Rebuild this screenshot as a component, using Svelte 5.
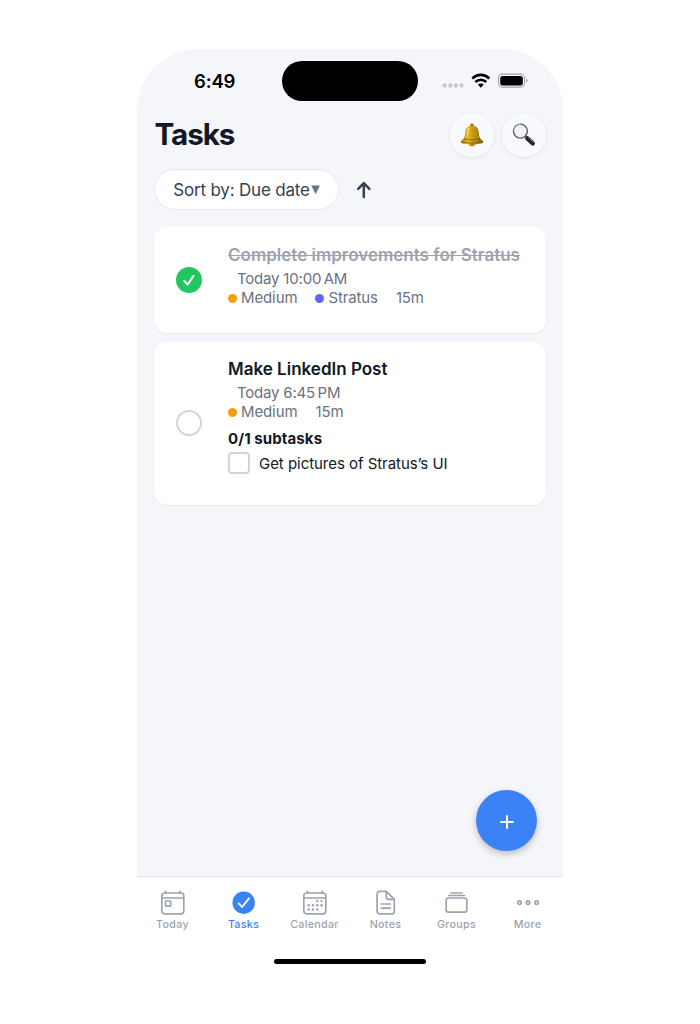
<script>
  const tasks = [
    {
      title: 'Complete improvements for Stratus',
      done: true,
      when: 'Today 10:00\u2009AM',
      group: 'Stratus',
      length: '15m',
      subtasks: []
    },
    {
      title: 'Make LinkedIn Post',
      done: false,
      when: 'Today 6:45\u2009PM',
      group: null,
      length: '15m',
      subtasks: ['Get pictures of Stratus’s UI']
    }
  ];
  const tabs = ['Today', 'Tasks', 'Calendar', 'Notes', 'Groups', 'More'];
  const days = [[16.3, 11.4], [20.6, 11.4], [7.6, 15.6], [11.9, 15.6], [16.3, 15.6], [20.6, 15.6], [7.6, 19.8], [11.9, 19.8], [16.3, 19.8]];
</script>

<main class="phone">
  <div class="status">
    <span class="time">6:49</span>
    <span class="island"></span>
    <svg class="signals" width="88" height="20" viewBox="0 0 88 20" aria-hidden="true">
      <g fill="#c6c7cb">
        <rect x=".6" y="12.6" width="4" height="3.8" rx="1.3" /><rect x="6.3" y="12.6" width="4" height="3.8" rx="1.3" />
        <rect x="11.9" y="12.6" width="4" height="3.8" rx="1.3" /><rect x="17.6" y="12.6" width="4" height="3.8" rx="1.3" />
      </g>
      <g fill="none" stroke="#000" stroke-width="2.6">
        <path d="M30.3 7.5C35.3 2.6 42.3 2.6 47.3 7.5" />
        <path d="M33.4 11C36.5 8 41.1 8 44.2 11" />
      </g>
      <path d="M35.8 13.6Q38.8 11.2 41.8 13.6L38.8 16.8Z" fill="#000" />
      <rect x="56.5" y="3.1" width="26" height="13" rx="4" fill="none" stroke="#a0a1a4" stroke-width="1.1" />
      <rect x="58.2" y="4.9" width="22.6" height="9.6" rx="2.5" fill="#000" />
      <path d="M84 7.7Q85.6 8.2 85.6 9.6T84 11.5Z" fill="#a0a1a4" />
    </svg>
  </div>

  <header>
    <h1>Tasks</h1>
    <div class="actions">
      <button aria-label="Notifications">
        <svg width="26" height="26" viewBox="0 0 26 26">
          <defs>
            <linearGradient id="gold"><stop offset="0" stop-color="#a87408" /><stop offset=".3" stop-color="#e6be2b" /><stop offset=".48" stop-color="#d0a01c" /><stop offset=".75" stop-color="#ae8312" /><stop offset="1" stop-color="#70500b" /></linearGradient>
          </defs>
          <circle cx="13" cy="3.2" r="1.8" fill="#9a6a16" />
          <ellipse cx="13" cy="22" rx="3" ry="2.3" fill="#bd7a20" />
          <path d="M13 3.4C7.6 3.5 6.2 7 6.1 11.4C6 15.6 4 17.3 2 19Q.9 22 6 21.8Q13 23.5 20 21.8Q25 21.8 24 19C21.8 17.3 20 15.6 19.9 11.4C19.8 7 18.4 3.5 13 3.4Z" fill="url(#gold)" />
          <path d="M5 17Q13 19.1 21 17M2.5 19.9Q13 22.9 23.5 19.9" fill="none" stroke="#8c600d" stroke-width=".9" />
          <path d="M9.8 6.2Q8.6 9 8.5 13" fill="none" stroke="#ffe77a" stroke-width="1.1" stroke-linecap="round" />
        </svg>
      </button>
      <button aria-label="Search">
        <svg width="26" height="26" viewBox="0 0 26 26">
          <path d="M14.2 14.2L17.3 17" stroke="#777b82" stroke-width="2.3" />
          <path d="M16.3 16.3L21.8 21.3" stroke="#24272c" stroke-width="4.4" stroke-linecap="round" />
          <path d="M17.6 15.8L22.6 20.3" stroke="#777b82" stroke-width=".9" stroke-linecap="round" />
          <circle cx="9.4" cy="9.1" r="7" fill="#f3f3f5" stroke="#596169" stroke-width="1.4" />
          <path d="M2.6 8.3A7 7 0 0 1 9.2 2.1" fill="none" stroke="#8fb4d4" stroke-width="1" />
        </svg>
      </button>
    </div>
  </header>

  <div class="sort">
    <button class="sort-by"><span>Sort by: Due date</span><svg width="9" height="10" viewBox="0 0 9 10"><path d="M.3 .5H8.9L4.6 9.3Z" fill="#6b7280" /></svg></button>
    <svg width="16" height="18" viewBox="0 0 16 18" fill="none" stroke="#374151" stroke-width="2.5" stroke-linecap="round" stroke-linejoin="round"><path d="M7.8 16V2.2M2.2 7.8L7.8 2.2L13.4 7.8" /></svg>
  </div>

  <section class="list">
    {#each tasks as task}
      <article class:tall={!task.done}>
        <div class="mark">
          {#if task.done}
            <svg width="26" height="26" viewBox="0 0 26 26"><circle cx="13" cy="13" r="13" fill="#22c55e" /><path d="M8.3 14L11.6 17.6L17.5 8.9" fill="none" stroke="#fff" stroke-width="2" stroke-linecap="round" stroke-linejoin="round" /></svg>
          {:else}
            <span class="ring"></span>
          {/if}
        </div>
        <div class="body">
          <h2 class:done={task.done}>{task.title}</h2>
          <p class="when">{task.when}</p>
          <p class="meta">
            <span class="tag"><i class="dot"></i>Medium</span>
            {#if task.group}<span class="tag"><i class="dot violet"></i>{task.group}</span>{/if}
            <span>{task.length}</span>
          </p>
          {#if task.subtasks.length}
            <h3>0/{task.subtasks.length} subtasks</h3>
            {#each task.subtasks as sub}
              <div class="sub"><span class="box"></span><span>{sub}</span></div>
            {/each}
          {/if}
        </div>
      </article>
    {/each}
  </section>

  <button class="fab" aria-label="Add task"><svg width="14" height="14" viewBox="0 0 14 14"><path d="M7 .3V13.7M.3 7H13.7" stroke="#fff" stroke-width="2" /></svg></button>

  <nav>
    {#each tabs as tab}
      <div class="tab" class:active={tab === 'Tasks'}>
        <svg width="28" height="26" viewBox="0 0 28 26" fill="none" stroke="currentColor" stroke-width="1.7" stroke-linecap="round" stroke-linejoin="round">
          {#if tab === 'Today'}
            <rect x="2.8" y="3" width="22" height="20.8" rx="2.8" /><path d="M3 8H24.6M6.6 1.3V3M21.1 1.3V3" /><rect x="6.5" y="11" width="5.2" height="5.2" rx=".8" />
          {:else if tab === 'Tasks'}
            <circle cx="13.7" cy="12.7" r="11.2" fill="currentColor" stroke="none" /><path d="M8.6 13.4L12 17L19 8.4" stroke="#fff" stroke-width="1.8" />
          {:else if tab === 'Calendar'}
            <rect x="2.8" y="3" width="22" height="20.8" rx="2.8" /><path d="M3 8H24.6M6.6 1.3V3M21.1 1.3V3" />
            {#each days as [x, y]}<circle cx={x} cy={y - 0.3} r="1.2" fill="currentColor" stroke="none" />{/each}
          {:else if tab === 'Notes'}
            <path d="M14.3 1.4H7.7A2.6 2.6 0 0 0 5.1 4V21.2A2.6 2.6 0 0 0 7.7 23.8H19.7A2.6 2.6 0 0 0 22.3 21.2V9.4ZM14.3 1.4V7.1Q14.3 9.4 16.6 9.4H22.3M9.3 14H18.2M9.3 18.2H18.2" />
          {:else if tab === 'Groups'}
            <rect x="3.2" y="8" width="20.6" height="14.2" rx="2.2" /><path d="M5.6 5.5H21.4M7.9 3H19.1" />
          {:else}
            <circle cx="5.5" cy="12.6" r="1.7" /><circle cx="14" cy="12.6" r="1.7" /><circle cx="22.6" cy="12.6" r="1.7" />
          {/if}
        </svg>
        <span>{tab}</span>
      </div>
    {/each}
  </nav>
  <div class="home"></div>
</main>

<style>
  :global(body) { margin: 0; background: #fff; }
  :global(#app) { display: flow-root; }
  .phone { box-sizing: border-box; position: relative; width: 426px; height: 926px; margin: 49px auto 0; border-radius: 61px; overflow: hidden; background: #f5f6fa; font-family: Inter, sans-serif; color: #111827; display: flex; flex-direction: column; }
  button { border: 0; padding: 0; margin: 0; font: inherit; color: inherit; display: flex; align-items: center; justify-content: center; }
  h1, h2, h3, p { margin: 0; white-space: nowrap; }
  svg { display: block; flex: none; }

  .status { display: grid; grid-template-columns: 145px 136px 145px; height: 52px; padding-top: 12px; box-sizing: border-box; align-items: center; }
  .time { padding-left: 57px; font-size: 18.5px; font-weight: 600; line-height: 24px; color: #000; letter-spacing: -.15px; }
  .island { height: 40px; border-radius: 20px; background: #000; }
  .signals { margin-left: 24px; }

  header { display: flex; justify-content: space-between; align-items: center; padding: 11.5px 17px 0 17.5px; height: 44px; }
  h1 { font-size: 29.7px; line-height: 43px; padding-bottom: 1px; font-weight: 700; letter-spacing: -1.1px; }
  .actions { display: flex; gap: 8px; }
  .actions button { width: 44px; height: 44px; border-radius: 50%; background: #f9fafb; box-shadow: 0 1px 4px rgba(17, 24, 39, .08); }

  .sort { display: flex; align-items: center; gap: 17px; padding: 12.5px 17px 0; }
  .sort-by { box-sizing: border-box; width: 185px; height: 41px; border: 1px solid #e5e7eb; border-radius: 21px; background: #fff; color: #374151; font-size: 17px; gap: 1px; white-space: nowrap; }
  .sort-by span { letter-spacing: -.18px; }

  .list { display: flex; flex-direction: column; gap: 8.5px; padding: 17px 17px 0; }
  article { box-sizing: border-box; display: grid; grid-template-columns: 70px 1fr; height: 106px; padding: 17px 4px; border-radius: 13px; background: #fff; box-shadow: 0 1px 2px rgba(17, 24, 39, .06); }
  article.tall { height: 163px; padding-top: 16.5px; }
  .mark { display: flex; align-items: center; padding-left: 18px; }
  .ring { box-sizing: border-box; width: 26px; height: 26px; border: 2px solid #d1d5db; border-radius: 50%; }
  .tall .mark { padding-top: 1px; }
  h2 { font-size: 17px; line-height: 23px; font-weight: 600; letter-spacing: 0; }
  h2.done { color: #9ca3af; text-decoration: line-through; text-decoration-thickness: 1px; }
  .when { padding: 2px 0 0 9px; font-size: 15px; line-height: 19px; color: #6b7280; letter-spacing: -.2px; }
  .meta { display: flex; gap: 18px; padding-top: 1px; font-size: 15px; line-height: 18px; color: #6b7280; letter-spacing: -.12px; }
  .tag { display: flex; align-items: center; gap: 4px; }
  .dot { width: 9px; height: 9px; border-radius: 50%; background: #f59e0b; }
  .dot.violet { background: #6366f1; }
  h3 { margin-top: 8px; font-size: 15px; line-height: 20px; font-weight: 700; letter-spacing: .1px; }
  .sub { display: flex; align-items: center; gap: 9px; margin-top: 3px; font-size: 15px; letter-spacing: -.04px; white-space: nowrap; }
  .box { box-sizing: border-box; width: 22px; height: 22px; border: 2px solid #d1d5db; border-radius: 4px; }

  .fab { position: absolute; right: 26px; top: 740.5px; width: 61px; height: 61px; padding-top: 3px; box-sizing: border-box; border-radius: 50%; background: #3b82f6; box-shadow: 0 3px 7px rgba(0, 0, 0, .24); }

  nav { margin-top: auto; box-sizing: border-box; height: 74px; flex: none; display: grid; grid-template-columns: repeat(6, 1fr); border-top: 1px solid #e2e4e9; background: #fff; padding-top: 13px; }
  .tab { display: flex; flex-direction: column; align-items: center; gap: 1px; color: #9ca3af; font-size: 10.7px; line-height: 16px; font-weight: 500; letter-spacing: .3px; }
  .tab.active { color: #3b82f6; }
  .home { box-sizing: border-box; flex: none; height: 25px; display: flex; justify-content: center; background: #fff; }
  .home::before { content: ''; margin-top: 8.5px; width: 152px; height: 5.5px; border-radius: 3px; background: #000; }
</style>
